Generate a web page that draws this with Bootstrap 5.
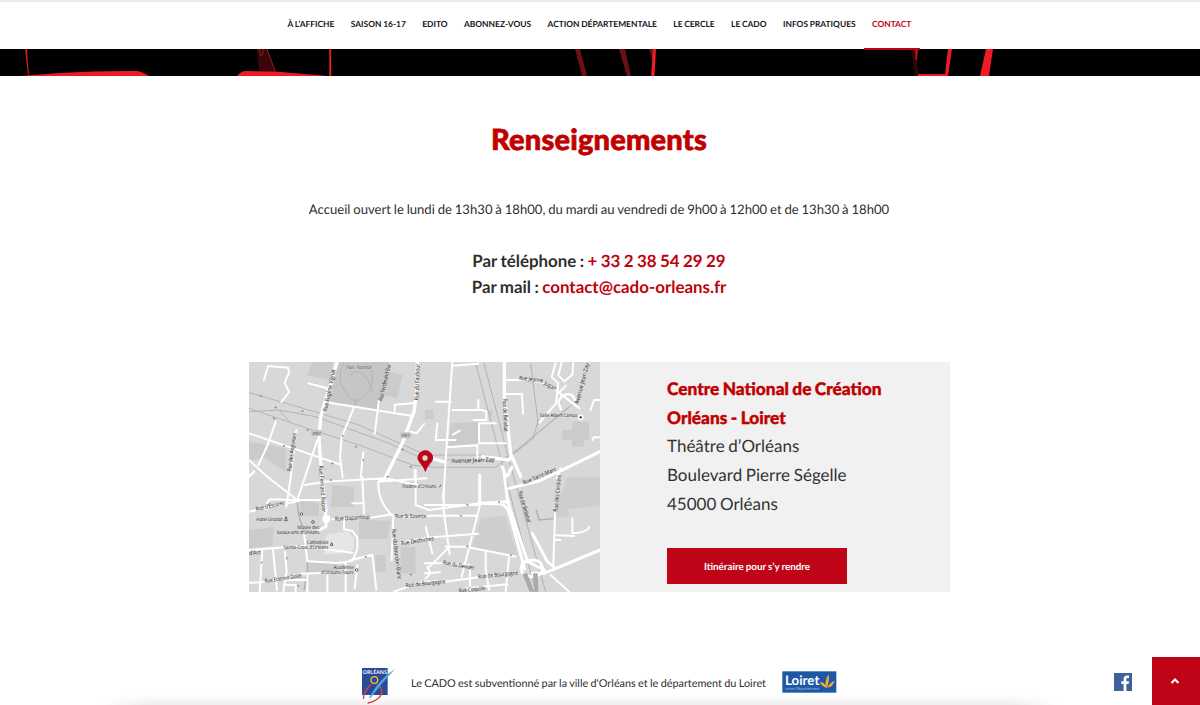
<!DOCTYPE html>
<html lang="fr">
<head>
<meta charset="utf-8">
<meta name="viewport" content="width=device-width, initial-scale=1">
<title>CADO - Contact</title>
<link href="https://cdn.jsdelivr.net/npm/bootstrap@5.3.0/dist/css/bootstrap.min.css" rel="stylesheet">
<style>
  body { font-family: Lato, "Liberation Sans", sans-serif; color: #2e2e2e; height: 705px; overflow: hidden; background: #fff; text-rendering: geometricPrecision; }
  p, address, .nav-link, .btn-route { word-spacing: -.04em; }
  .topbar { height: 49px; border-top: 2px solid #ebebeb; background: #fff; z-index: 2; position: relative; }
  .topbar .nav { padding-right: 1px; }
  .topbar .nav-link { font-size: 8.42px; font-weight: 700; color: #16171b; padding: 0 8.2px; height: 48px; line-height: 45px; border-bottom: 2px solid transparent; white-space: nowrap; }
  .topbar .nav-link.active { color: #c00418; border-bottom-color: #c00418; }
  .hero { height: 27px; background: #000; }
  .brand-red { color: #c00000; }
  h1 { font-size: 29px; font-weight: 900; line-height: 40px; margin: 44px 0 0; letter-spacing: .2px; -webkit-text-stroke: .7px #c00000; }
  .hours { font-size: 13.12px; line-height: 20px; margin: 39px 0 0; }
  .reach { font-size: 16.9px; font-weight: 700; line-height: 26px; margin: 29px 0 0; }
  .reach a { color: #c0000c; text-decoration: none; }
  .main-col { padding-right: 2px; }
  .venue { width: 701px; height: 230px; background: #f1f1f1; margin: 62px 0 0 249px; }
  .venue-map { width: 351px; height: 230px; }
  .venue address { font-size: 17px; line-height: 28.7px; margin: 13px 0 0; color: #333; }
  .venue address strong { font-size: 17.3px; font-weight: 900; color: #c00000; -webkit-text-stroke: .4px #c00000; }
  .venue-text { padding-left: 67px; }
  .btn-route { width: 180px; height: 36px; margin-top: 29px; padding: 0; border: 0; border-radius: 0; background: #c00418; color: #fff; font-size: 9.85px; font-weight: 700; line-height: 38px; }
  .btn-route:hover { background: #a00313; color: #fff; }
  .bottom { height: 48px; margin-top: 65px; }
  .bottom p { font-size: 10.85px; line-height: 17px; width: 355px; margin: 18px 16px 0 16px; white-space: nowrap; }
  .floor-shade { position: absolute; left: 100px; bottom: 0; width: 960px; height: 10px; background: linear-gradient(transparent, #0001); -webkit-mask-image: linear-gradient(90deg, transparent, #000 5%, #000 95%, transparent); }
  .to-top { width: 48px; height: 48px; background: #c00418; margin-left: 20px; }
  svg { display: block; }
  svg text { font-family: "Open Sans", "Noto Sans", sans-serif; }
</style>
</head>
<body class="position-relative">
<header class="topbar">
  <nav class="nav justify-content-center flex-nowrap">
    <a class="nav-link" href="#">À L’AFFICHE</a>
    <a class="nav-link" href="#">SAISON 16-17</a>
    <a class="nav-link" href="#">EDITO</a>
    <a class="nav-link" href="#">ABONNEZ-VOUS</a>
    <a class="nav-link" href="#">ACTION DÉPARTEMENTALE</a>
    <a class="nav-link" href="#">LE CERCLE</a>
    <a class="nav-link" href="#">LE CADO</a>
    <a class="nav-link" href="#">INFOS PRATIQUES</a>
    <a class="nav-link active" href="#">CONTACT</a>
  </nav>
</header>
<div class="hero">
  <svg width="1200" height="27" viewBox="0 0 1200 27" fill="#ed1c24">
    <path d="M25 0h2l2 27h-1z" fill="#c81a20"/>
    <path d="M20 27L60 24Q100 21.500 138 22Q143 23 149 27z"/>
    <path d="M257 0h10l9 22h-17z" fill="#3a0508"/><path d="M259 0l2 7 2-2v-5M267 0l8 22" fill="none" stroke="#8a2024"/>
    <path d="M237 27Q241 22 246 22L275 22.500L328 27z"/>
    <path d="M329.300 0h1.900v27h-1.900z"/>
    <path d="M575 0h5l7 27h-5z" fill="#6c1014"/><path d="M619 0h6l6 27h-4z" fill="#6c1014"/>
    <path d="M649 0h5l-1 12z" fill="#6c1014"/><path d="M653 0h3l-1.500 27h-3.500z"/>
    <path d="M911 0h4l4 27h-4z" fill="#310406"/><path d="M915 0h3l-1 11h-1.300z" fill="#b01a20"/>
    <path d="M948 0h4l-4 27h-30v-2h27z"/><path d="M986 0h7l-4 27h-9z"/>
  </svg>
</div>
<main>
  <div class="main-col text-center">
    <h1 class="brand-red">Renseignements</h1>
    <p class="hours">Accueil ouvert le lundi de 13h30 à 18h00, du mardi au vendredi de 9h00 à 12h00 et de 13h30 à 18h00</p>
    <p class="reach">Par téléphone : <a href="#">+ 33 2 38 54 29 29</a><br>Par mail : <a href="#">contact@cado-orleans.fr</a></p>
  </div>
  <section class="venue d-flex">
    <svg class="venue-map" viewBox="0 6 1053 690" preserveAspectRatio="none">
      <rect y="6" width="1053" height="690" fill="#d8d8d8"/>
      <!-- parks and built-up blocks -->
      <g fill="#cbcbcb">
        <path d="M190 6h60l-5 55-70-15zM400 30l60 15-15 70-45-10zM0 245l110 20v70L50 295 0 300z"/>
        <path d="M268 6h152l-30 146-148-24z" fill="#c6c6c6"/>
        <path d="M606 190l84-5 2 65-94 7zM720 150h10v20h-10zM970 185h50v55h-15v20h-35v-20h-30v-30h30zM528 150h25v28h-25z"/>
        <path d="M250 375l65 5v60l-70 2zM150 420l60 10v40l-55-5zM0 510l75-8-5 55-70 10zM330 480l95 2-10 55h-85zM175 605h90v35h-90zM380 585h30v50h-30zM455 560h45v80h-45z"/>
        <path d="M695 475l75-8 35 118-135-24zM955 352h98v85l-95 10v25h-50l20-50z" opacity=".7"/>
      </g>
      <path d="M225 545l10-22 60-8 20 18v35l-30 12-60 4z" fill="#e6e6e6"/>
      <g fill="none" stroke="#b4b4b4" stroke-width="3">
        <path d="M285 10q-25 40 0 80q15 25 35 35q45-20 50-60q5-40-20-55M305 45q10-15 30-8q25 15 35 60M320 115l-3 25"/>
        <path d="M0 98L180 150L330 195L430 240L530 285H700L770 305M0 145L160 200L330 255L490 315L560 322H740L1000 110M0 155L90 150L200 170L420 250L530 300H700L780 290L960 140M90 150l35 38"/>
        <path d="M680 10L860 695M705 10L780 300L890 695M845 10l22 175 0 10M868 180l-10 35-5 20-70 55" stroke="#aaa" stroke-width="2.500"/>
        <path d="M862 450l8 30 45-4M145 415q0 60 20 90M175 600v40l-10 50" stroke="#adadad" stroke-width="4"/>
      </g>
      <!-- secondary streets -->
      <g fill="none" stroke="#fff" stroke-width="6" stroke-linecap="round" stroke-linejoin="round">
        <path d="M45 60l12-42 60 5 3 15-13 30 13 28-23 30M178 70l56 15M242 128L490 168M315 142l-37 90-5 60 8 60M390 120l-13 102M437 158v-24l60-5M483 215l20 5 22-28M80 185l-24 70-28 60M142 210l-18 150-12 80M0 220l278 95M343 276l-8 75M497 330v30"/>
        <path d="M0 300l55 50 90 70M205 240l-60 180M65 418q-15 5-10 30M65 418l80 2h80M225 365l185-10 125 27M168 375l60-10M0 455l100-22 50-10M340 350l5 110M310 430h35M410 355l-22 10q-3 60 45 105l-5 130M388 365l145-10M435 472l95-2M500 330l0 105 40 15 155-20"/>
        <path d="M250 478l115-5 65-10M285 480v28l25 5 15 20v35l-15 35-45 6-90-5-10-85M0 570l160-12 150 20M72 570l12 120M108 575l5 60-10 60M40 570l-8 125M0 668l50-2 110-25 100-4M175 640v55M235 640v55M290 610v85M325 615l-8 70M300 602l70-18 12 105M112 660h60M112 675h28v20"/>
        <path d="M610 6L590 300 583 420M610 150h90l12 5v25h-38M688 120v30M560 125h45M610 17l78-6M565 190l-5 50h60M632 212l-20 12M690 250v-60h50M690 250h80M595 262l90-6v45M766 102h53l3 60M766 60h70q60 5 90 35l65 50M920 10l-12 40 20 20-7 60-50 58M938 6l-10 40 18 18 24-20 3-35M933 95l18-18"/>
        <path d="M583 395l2 50M528 435h165l-55 215M528 467h155M582 438l20 145M528 533l160-12M602 560l-60 60M590 560h60l150 30M710 575v50l10 65M780 590l-10 105M528 610h45l90 5v80M528 640l45-3M590 665l20-3 190-25M535 620l10 20-15 15M435 695l85-30 70-3M455 548l75-15M530 500l20 80"/>
        <path d="M918 460l-5 155M970 475v45q50-5 50-20M915 525l60 3M915 540h20M935 325l-12 30M905 645l55 50M655 685l120-12M1025 150l10-30 18 0M1030 240l5-8h18"/>
      </g>
      <!-- main streets -->
      <g fill="none" stroke="#fff" stroke-linecap="round" stroke-linejoin="round">
        <path d="M266 0L215 170L210 240L220 370L231 455M495 155L462 245L405 360M505 0v80l-10 75M766 6v100L785 280 815 350M528 290l55 15M700 290l80 10 5-10" stroke-width="10"/>
        <path d="M231 480v20l-20 10M232 478L220 400M0 350l15-15" stroke-width="8"/>
        <path d="M692 345v85l65 2q20 5 30 50l40 145M766 345l10 80 60 180 50 25M880 640q5-40-30-40-32 2-34 25 2 25 32 25 30-3 32-20M885 640L1053 570M870 640h-20M780 425L690 430M788 322l-12 25M760 320l10 30M780 385l90-22 80-38 103-50M850 520l45 85 25 20" stroke-width="9"/>
        <path d="M928 128q5-22 25-25t25 18M928 128l8 20" stroke-width="7"/>
      </g>
      <circle cx="232" cy="477" r="12" fill="#fff"/>
      <path d="M820 642l14-4 22 57h-14zM852 640h14l2 55h-12z" fill="#aaa"/>
      <g fill="#888"><path d="M30 107l8-3v7zM75 142l8-3v7zM155 153l8-3v7zM70 175l8-3v7zM170 210l8-3v7zM315 260l8-3v7zM455 268l8-3v7zM480 320l8-3v7zM245 310l8-3v7zM340 298l3 8 3-8zM278 225l3 8 3-8zM100 257l8-3v7zM240 360l8-3v7zM410 350l8-3v7zM650 434l8-3v7zM745 426l8-3v7zM630 467l8-3v7zM650 559l8-3v7zM780 585l8-3v7zM35 605l3 8 3-8zM110 592l3 8 3-8zM345 590l8-3v7zM145 675l3 8 3-8zM480 643l8-3v7z"/></g>
      <rect x="187" y="210" width="32" height="18" rx="4" fill="#c4c4c4"/><rect x="454" y="217" width="32" height="18" rx="4" fill="#c4c4c4"/>
      <!-- place and street names -->
      <g font-size="17" font-weight="500" fill="#222" stroke="#e0e0e0" stroke-width="1" paint-order="stroke">
        <text x="292" y="26" textLength="76" lengthAdjust="spacingAndGlyphs" font-size="15" fill="#444" font-style="italic">Parc Pasteur</text>
        <text x="191" y="224" font-size="13" textLength="24" lengthAdjust="spacingAndGlyphs">D97</text><text x="458" y="231" font-size="13" textLength="24" lengthAdjust="spacingAndGlyphs">D97</text>
        <text transform="translate(233 155) rotate(-78)" textLength="128" lengthAdjust="spacingAndGlyphs">Rue Eugène Vignat</text>
        <text transform="translate(400 124) rotate(-77)" textLength="112" lengthAdjust="spacingAndGlyphs">Rue Ferdinand Bui</text>
        <text transform="translate(508 121) rotate(-88)" textLength="110" lengthAdjust="spacingAndGlyphs">Rue du Faubour</text>
        <text transform="translate(126 335) rotate(-82)" textLength="116" lengthAdjust="spacingAndGlyphs">Rue des Anglaises</text>
        <text transform="translate(210 317) rotate(86)" textLength="140" lengthAdjust="spacingAndGlyphs">Rue Fernand Rabier</text>
        <text x="608" y="309" font-size="18" textLength="129" lengthAdjust="spacingAndGlyphs" transform="rotate(-2 608 309)">Avenue Jean Zay</text>
        <text transform="translate(762 117) rotate(88)" textLength="99" lengthAdjust="spacingAndGlyphs">Rue de Bellebat</text>
        <text transform="translate(810 59) rotate(7)" textLength="72" lengthAdjust="spacingAndGlyphs">Rue Jeanne</text><text transform="translate(884 73) rotate(29)" textLength="40" lengthAdjust="spacingAndGlyphs">Jugan</text>
        <text x="873" y="171" font-size="15" textLength="112" lengthAdjust="spacingAndGlyphs">Salle Albert Camus</text>
        <text transform="translate(988 133) rotate(-75)" textLength="127" lengthAdjust="spacingAndGlyphs">Avenue Jean Zay</text>
        <text transform="translate(824 374) rotate(-23)" textLength="108" lengthAdjust="spacingAndGlyphs">Rue Saint-Marc</text>
        <text transform="translate(808 395) rotate(74)" textLength="98" lengthAdjust="spacingAndGlyphs">Rue de Bellebat</text>
        <text transform="translate(925 455) rotate(-84)" textLength="110" lengthAdjust="spacingAndGlyphs">Rue des Cordiers</text>
        <text x="458" y="384" font-size="15" textLength="103" lengthAdjust="spacingAndGlyphs">Théâtre d’Orléans</text>
        <text transform="translate(22 453) rotate(-13)" textLength="88" lengthAdjust="spacingAndGlyphs">Rue d’Escures</text>
        <text x="22" y="482" font-size="15" textLength="78" lengthAdjust="spacingAndGlyphs">Hotel Groslot</text>
        <text x="258" y="482" textLength="105" lengthAdjust="spacingAndGlyphs" transform="rotate(-3 258 482)">Rue Dupanloup</text>
        <text x="145" y="508" font-size="15" textLength="66" lengthAdjust="spacingAndGlyphs">Musée des</text><text x="84" y="523" font-size="15" textLength="127" lengthAdjust="spacingAndGlyphs">beaux-arts d’Orléans</text>
        <text x="174" y="551" font-size="15" textLength="64" lengthAdjust="spacingAndGlyphs">Cathédrale</text><text x="104" y="566" font-size="15" textLength="134" lengthAdjust="spacingAndGlyphs">Sainte-Croix d’Orléans</text>
        <text x="1" y="585" textLength="35" lengthAdjust="spacingAndGlyphs" transform="rotate(-4 0 585)">d’Arc</text>
        <text x="254" y="628" font-size="15" textLength="60" lengthAdjust="spacingAndGlyphs">Académie</text><text x="216" y="643" font-size="15" textLength="97" lengthAdjust="spacingAndGlyphs">d’Orléans-Tours</text>
        <text x="48" y="669" textLength="112" lengthAdjust="spacingAndGlyphs" transform="rotate(-9 48 669)">Rue Etienne Dolet</text>
        <text x="438" y="474" textLength="94" lengthAdjust="spacingAndGlyphs">Rue St Euverte</text>
        <text transform="translate(428 508) rotate(83)" textLength="152" lengthAdjust="spacingAndGlyphs">Rue du Bourdon Blanc</text>
        <text transform="translate(457 556) rotate(-9)" textLength="99" lengthAdjust="spacingAndGlyphs">Rue Desfriches</text>
        <text transform="translate(581 613) rotate(10)" textLength="95" lengthAdjust="spacingAndGlyphs">Rue du Devidet</text>
        <text transform="translate(471 682) rotate(-6)" textLength="119" lengthAdjust="spacingAndGlyphs">Rue de Bourgogne</text>
        <text transform="translate(688 656) rotate(-6)" textLength="120" lengthAdjust="spacingAndGlyphs">Rue de Bourgogne</text>
        <text transform="translate(630 698) rotate(-6)" textLength="80" lengthAdjust="spacingAndGlyphs">Rue Coquille</text>
      </g>
      <g fill="#fff" stroke="#444" stroke-width="2.500"><circle cx="995" cy="172" r="6" fill="#222" stroke="#fff" stroke-width="5"/><circle cx="157" cy="462" r="4"/><circle cx="192" cy="486" r="4"/><circle cx="323" cy="630" r="4"/><path d="M107 482l4-12 4 12zM244 556l4-8 4 8zM571 382l5-8"/></g>
      <path d="M529 334c-5-18-22-29-22-40a22 22 0 0 1 44 0c0 11-17 22-22 40z" fill="#c00418" stroke="#c00418" stroke-width="3"/><circle cx="528" cy="294" r="8" fill="#d8d8d8"/>
    </svg>
    <div class="venue-text">
      <address><strong>Centre National de Création<br>Orléans - Loiret</strong><br>Théâtre d’Orléans<br>Boulevard Pierre Ségelle<br>45000 Orléans</address>
      <a class="btn btn-route" href="#">Itinéraire pour s’y rendre</a>
    </div>
  </section>
</main>
<footer class="bottom d-flex align-items-start">
  <svg width="34" height="38" viewBox="0 0 102 114" style="margin:10px 0 0 361px">
    <rect x="3" y="3" width="77" height="81" fill="#2b4a99"/>
    <text x="5" y="20" font-size="16" font-weight="600" fill="#fff" textLength="73" lengthAdjust="spacingAndGlyphs">ORLÉANS</text>
    <circle cx="40" cy="39" r="10" fill="none" stroke="#e8c23c" stroke-width="4"/>
    <path d="M30 52Q8 74 7 96M47 50Q75 72 52 94Q38 106 20 108" fill="none" stroke="#dd4535" stroke-width="4"/>
    <path d="M102 6Q60 30 24 92L29 92Q65 45 102 6z" fill="#50a5dc"/>
  </svg>
  <p>Le CADO est subventionné par la ville d'Orléans et le département du Loiret</p>
  <svg width="55" height="22" viewBox="0 0 165 66" style="margin-top:14px">
    <rect x="1" y="1" width="162" height="64" fill="#1c58a5"/>
    <text x="9" y="41" font-size="40" font-weight="700" fill="#fff" textLength="103" lengthAdjust="spacingAndGlyphs" style="font-family:Lato,sans-serif">Loiret</text>
    <text x="10" y="56" font-size="12" fill="#a9c8ec" textLength="102" lengthAdjust="spacingAndGlyphs">votre Département</text>
    <path d="M113 34q14-3 20 16q-11-1-20-16zM131 50q-3-25 9-40q3 22-5 40zM137 50q4-14 21-21q-5 18-21 21z" fill="#f0ab30"/>
  </svg>
  <svg class="ms-auto" width="18" height="18" viewBox="0 0 18 18" style="margin-top:16px">
    <rect width="18" height="18" fill="#3f5f9d"/><path d="M9.600 18v-7H7.300V8.200h2.300V6.100c0-2.300 1.300-3.500 3.400-3.500h2v2.500h-1.300c-1 0-1.300.5-1.300 1.300v1.800h2.600l-.4 2.800h-2.200v7z" fill="#fff"/>
  </svg>
  <a class="to-top d-flex align-items-center justify-content-center" href="#" aria-label="Haut de page">
    <svg width="10" height="8" viewBox="0 0 10 8" fill="none" stroke="#fff" stroke-width="2" style="margin-right:2px"><path d="M1.500 6L5 2.500L8.500 6"/></svg>
  </a>
</footer>
<div class="floor-shade"></div>
<script src="https://cdn.jsdelivr.net/npm/bootstrap@5.3.0/dist/js/bootstrap.bundle.min.js"></script>
</body>
</html>
